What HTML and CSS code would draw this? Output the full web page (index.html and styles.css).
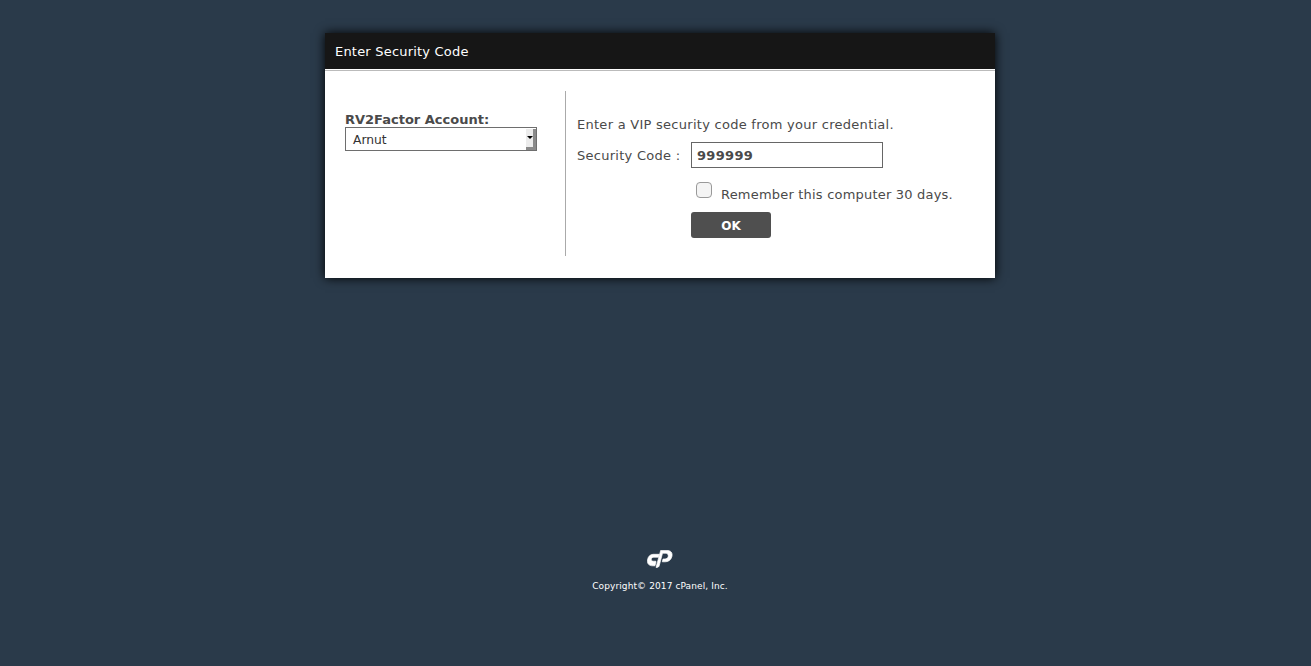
FILE: index.html
```html
<!DOCTYPE html>
<html lang="en">
<head>
  <meta charset="UTF-8">
  <title>Enter Security Code</title>
  <link rel="stylesheet" href="styles.css">
</head>
<body>

  <div class="dialog">
    <div class="dialog-title">Enter Security Code</div>
    <div class="dialog-body">
      <!-- Account picker -->
      <div class="account">
        <label class="account-label">RV2Factor Account:</label>
        <div class="select">
          <span>Arnut</span>
          <span class="select-btn"><i></i></span>
        </div>
      </div>

      <!-- Code form -->
      <div class="code">
        <p class="hint">Enter a VIP security code from your credential.</p>
        <div class="code-row">
          <label class="code-label">Security Code :</label>
          <input class="code-input" value="999999">
        </div>
        <div class="remember">
          <span class="check"></span>
          <span class="remember-text">Remember this computer 30 days.</span>
        </div>
        <button class="ok">OK</button>
      </div>
    </div>
  </div>

  <div class="footer">
    <svg class="logo" width="26" height="18" viewBox="0 0 26 18">
      <path fill="#fff" stroke="#fff" stroke-width="0.7" d="M6.200 4.300H12.200L11.500 7.200H6.800C5.600 7.200 4.600 8 4.300 9C4 10.300 5 11.200 6.200 11.200H8.400C9 11.200 9.200 11.500 9 12L8 15.800H5.500C2 15.800 -.2 13.500 .5 9.800C1.200 6.400 3.200 4.300 6.200 4.300Z"/>
      <path fill="#fff" stroke="#fff" stroke-width="0.7" d="M13.700 .4H20C24 .4 25.800 3 24.900 6.500C24.100 9.800 21.500 11.800 18.300 11.800H15.300L16 9H18C19.500 9 20.800 8 21.200 6.500C21.600 4.800 20.500 3.200 19 3.200H15.500L12.200 15.800C11.900 16.800 11 17.400 10 17.400H9L13.700 .4Z"/>
    </svg>
    <div class="copyright">Copyright© 2017 cPanel, Inc.</div>
  </div>

</body>
</html>
```

FILE: styles.css
```css
html, body { margin: 0; padding: 0; }
body { background: #2a3a4a; font-family: "DejaVu Sans", Verdana, sans-serif; color: #4a4a4a; height: 666px; overflow: hidden; padding-left: 9px; }

.dialog { width: 670px; margin: 33px auto 0; background: #fff; box-shadow: 0 0 10px #000; height: 245px; }
.dialog-title { height: 36px; line-height: 37px; padding-left: 10px; background: #161616; color: #fff; font-size: 13px; letter-spacing: 0.2px; border-bottom: 1px solid #fff; }
.dialog-body { display: flex; border-top: 1px solid #bbb; padding: 20px 0 0 20px; }

.account { width: 220px; padding-top: 21px; }
.account-label { display: block; font-size: 13px; font-weight: bold; line-height: 15px; color: #4a4a4a; }
.select { width: 183px; height: 22px; border: 1px solid #6e6e6e; display: flex; justify-content: space-between; font-size: 12.300px; line-height: 24px; color: #333; padding-left: 7px; }
.select-btn { width: 7px; background: #ececec; border-right: 3px solid #8a8a8a; border-bottom: 3px solid #8a8a8a; margin-top: 1px; }
.select-btn i { display: block; width: 0; height: 0; border: 3px solid transparent; border-top: 3px solid #000; margin: 7px 0 0 1px; }

.code { border-left: 1px solid #aaa; height: 165px; padding-left: 11px; flex: 1; }
.hint { margin: 26px 0 0; font-size: 13px; line-height: 16px; letter-spacing: 0.27px; color: #4a4a4a; }
.code-row { display: flex; align-items: center; margin-top: 9px; }
.code-label { width: 114px; font-size: 13px; letter-spacing: 0.27px; }
.code-input { width: 180px; height: 24px; padding: 0 5px; border: 1px solid #666; font: bold 13px "DejaVu Sans", sans-serif; letter-spacing: 0.3px; color: #4a4a4a; outline: none; }
.remember { display: flex; margin: 14px 0 0 119px; font-size: 13px; line-height: 16px; }
.check { width: 14px; height: 14px; margin-right: 9px; border: 1px solid #999; border-radius: 4px; background: #f4f4f4; }
.remember-text { padding-top: 5px; letter-spacing: 0.2px; }
.ok { display: block; width: 80px; height: 26px; margin: 9px 0 0 114px; padding: 1px 0 0; background: #4f4f4f; color: #fff; border: 0; border-radius: 3px; font: bold 12px "DejaVu Sans", sans-serif; }

.footer { margin-top: 272px; text-align: center; }
.logo { display: block; margin: 0 auto; }
.copyright { margin-top: 12px; font-size: 9px; letter-spacing: 0.1px; line-height: 12px; color: #fff; }
```
